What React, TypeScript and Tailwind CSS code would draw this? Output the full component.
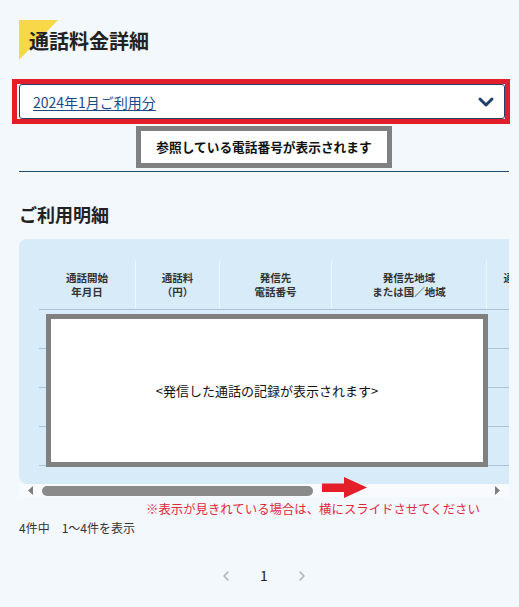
import { ChevronDown, ChevronLeft, ChevronRight } from "lucide-react";

const columns = [
  { top: "通話開始", bottom: "年月日", width: "w-[96px]" },
  { top: "通話料", bottom: "（円）", width: "w-[84px]" },
  { top: "発信先", bottom: "電話番号", width: "w-[112px]" },
  { top: "発信先地域", bottom: "または国／地域", width: "w-[155px]" },
  { top: "通話時間", bottom: "（秒）", width: "w-[76px]" },
];

const rows = [1, 2, 3, 4];

const App = () => {
  return (
    <div className="min-h-[607px] w-full bg-[#f3f8fd] pl-[19px] pr-[10px] pt-[20px] font-['Noto_Sans_CJK_JP',sans-serif] text-[#222]">
      {/* page title with yellow corner */}
      <div className="relative h-[40px]">
        <svg className="absolute left-0 top-0" width="40" height="40" viewBox="0 0 40 40">
          <polygon points="0,0 39,0 0,40" fill="#f8d748" />
        </svg>
        <h1 className="relative pl-[10px] text-[20px] font-bold leading-[42px]">通話料金詳細</h1>
      </div>

      <div className="-ml-[7px] mt-[19px] w-[498px] border-[5px] border-[#e31e2b] pl-[2px]">
        <div className="flex h-[35px] items-center justify-between rounded-[3px] border border-[#233f6e] bg-white pl-[13px] pr-[6px]">
          <span className="text-[14px] leading-none text-[#1b4a86] underline underline-offset-2">
            2024年1月ご利用分
          </span>
          <ChevronDown size={24} strokeWidth={3} color="#1f3e6b" />
        </div>
      </div>

      <div className="mx-auto mt-[2px] flex h-[42px] w-[256px] items-center justify-center border-[5px] border-[#808080] bg-white">
        <span className="text-[12.7px] font-bold text-[#111]">参照している電話番号が表示されます</span>
      </div>

      <div className="mt-[3px] h-px w-full bg-[#1e4d6b]" />

      <h2 className="mt-[29px] text-[18px] font-bold leading-[26px]">ご利用明細</h2>

      {/* table, scrolled horizontally: last column is cut at the edge */}
      <div className="relative mt-[12px] overflow-hidden rounded-l-lg bg-[#d8ebf8] pb-[18px] pl-[20px] pt-[21px]">
        <div className="flex w-max border-b border-[#a9c3d8]">
          {columns.map((col, i) => (
            <div
              key={col.top}
              className={`${col.width} flex h-[49px] shrink-0 flex-col items-center justify-center text-[10.5px] font-bold leading-[14px] text-[#333] ${
                i > 0 ? "border-l border-[#eef6fc]" : ""
              }`}
            >
              <span>{col.top}</span>
              <span>{col.bottom}</span>
            </div>
          ))}
        </div>
        {rows.map((row) => (
          <div key={row} className="h-[39px] w-[470px] border-b border-[#a9c3d8]" />
        ))}

        <div className="absolute left-[27px] top-[75px] flex h-[153px] w-[442px] items-center justify-center border-[5px] border-[#808080] bg-white">
          <span className="text-[13px] text-[#111]">&lt;発信した通話の記録が表示されます&gt;</span>
        </div>
      </div>

      {/* scrollbar */}
      <div className="relative flex h-[13px] items-center bg-[#f8fafd] pl-[9px] pr-[9px]">
        <svg width="5" height="9" viewBox="0 0 5 9">
          <polygon points="5,0 5,9 0,4.5" fill="#7d7d7d" />
        </svg>
        <div className="ml-[9px] h-[10px] w-[271px] rounded-full bg-[#8a8a8a]" />
        <svg className="ml-auto" width="5" height="9" viewBox="0 0 5 9">
          <polygon points="0,0 0,9 5,4.5" fill="#7d7d7d" />
        </svg>
        <svg className="absolute left-[303px] top-[-7px]" width="45" height="21" viewBox="0 0 45 21">
          <polygon points="0,6.5 22,6.5 22,0 45,10.5 22,21 22,15 0,15" fill="#e3202a" />
        </svg>
      </div>

      <p className="mt-[3px] whitespace-nowrap pl-[127px] text-[12.4px] leading-[18px] text-[#e0283a]">
        ※表示が見きれている場合は、横にスライドさせてください
      </p>

      <p className="mt-px text-[12px] leading-[18px] text-[#333]">4件中　1〜4件を表示</p>

      <div className="mt-[28px] flex items-center justify-center text-[14px] text-[#222]">
        <span className="flex w-[38px] justify-center">
          <ChevronLeft size={16} strokeWidth={2} color="#a6afbd" />
        </span>
        <span className="flex w-[38px] justify-center">1</span>
        <span className="flex w-[38px] justify-center">
          <ChevronRight size={16} strokeWidth={2} color="#a6afbd" />
        </span>
      </div>
    </div>
  );
};

export default App;
